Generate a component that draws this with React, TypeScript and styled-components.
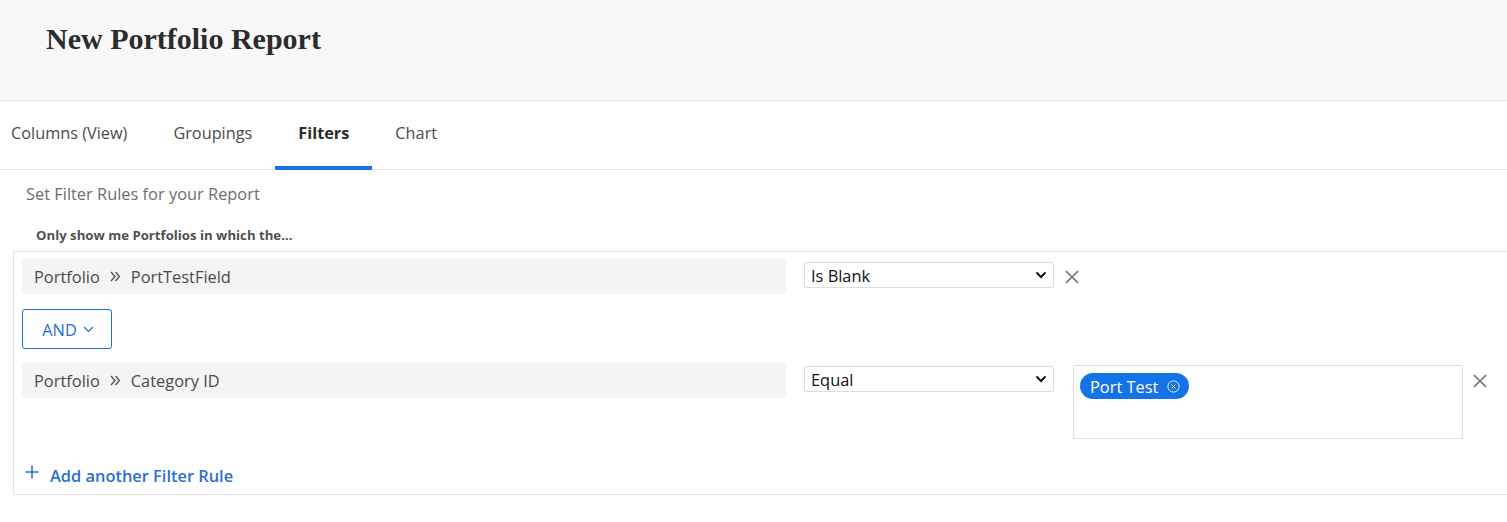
import styled, { createGlobalStyle } from "styled-components";

const GlobalStyle = createGlobalStyle`
  html, body {
    margin: 0;
    padding: 0;
    background: #ffffff;
    overflow: hidden;
  }
  body {
    font-family: "Open Sans", "Liberation Sans", sans-serif;
  }
`;

const Page = styled.div`
  width: 1507px;
  height: 522px;
  display: flex;
  flex-direction: column;
`;

const Header = styled.div`
  height: 101px;
  box-sizing: border-box;
  background: #f8f8f8;
  border-bottom: 1px solid #e6e6e6;
  padding: 19px 0 0 46px;
`;

const Title = styled.h1`
  margin: 0;
  font-family: "Liberation Serif", "Times New Roman", serif;
  font-weight: 700;
  font-size: 30px;
  line-height: 40px;
  color: #2c2c2c;
`;

const TabBar = styled.div`
  display: flex;
  height: 69px;
  box-sizing: border-box;
  border-bottom: 1px solid #e6e6e6;
  margin-left: -12px;
`;

const Tab = styled.div<{ $active?: boolean }>`
  display: flex;
  align-items: center;
  padding: 0 23px 2px;
  margin-bottom: -1px;
  font-size: 16.3px;
  color: ${(p) => (p.$active ? "#2c2c2c" : "#4b4b4b")};
  font-weight: ${(p) => (p.$active ? 700 : 400)};
  border-bottom: 4px solid ${(p) => (p.$active ? "#1473e6" : "transparent")};
`;

const Body = styled.div`
  display: flex;
  flex-direction: column;
`;

const Intro = styled.div`
  margin: 13px 0 0 26px;
  font-size: 16.4px;
  line-height: 22px;
  color: #6e6e6e;
`;

const Lead = styled.div`
  margin: 21px 0 0 36px;
  font-size: 13.2px;
  font-weight: 700;
  line-height: 18px;
  color: #505050;
`;

const RuleBox = styled.div`
  margin: 7px -20px 0 13px;
  border: 1px solid #e4e4e4;
  padding: 7px 0 7px 8px;
  display: flex;
  flex-direction: column;
  height: 244px;
  box-sizing: border-box;
`;

const Row = styled.div`
  display: flex;
  align-items: flex-start;
`;

const Field = styled.div`
  width: 764px;
  height: 35px;
  box-sizing: border-box;
  background: #f4f4f4;
  border-radius: 2px;
  display: flex;
  align-items: center;
  padding-left: 12px;
  font-size: 16.4px;
  color: #4b4b4b;
  gap: 10px;
`;

const Select = styled.div`
  margin: 3px 0 0 18px;
  width: 250px;
  height: 26px;
  box-sizing: border-box;
  border: 1px solid #dcdcdc;
  border-radius: 2px;
  display: flex;
  align-items: center;
  justify-content: space-between;
  padding: 0 6px 0 6px;
  font-size: 16.4px;
  color: #111;
`;

const RemoveButton = styled.button<{ $left: number; $top: number }>`
  margin: ${(p) => `${p.$top}px 0 0 ${p.$left}px`};
  width: 20px;
  height: 20px;
  padding: 0;
  border: none;
  background: none;
  display: flex;
  align-items: center;
  justify-content: center;
  cursor: pointer;
`;

const AndButton = styled.button`
  margin: 15px 0 14px 0;
  width: 90px;
  height: 40px;
  box-sizing: border-box;
  border: 1px solid #1a6fd6;
  border-radius: 3px;
  background: #fff;
  color: #1d6ed8;
  font-family: inherit;
  font-size: 16.4px;
  display: flex;
  align-items: center;
  justify-content: center;
  gap: 6px;
  padding: 0 0 0 2px;
`;

const ValueBox = styled.div`
  margin: 2px 0 0 19px;
  width: 390px;
  height: 74px;
  box-sizing: border-box;
  border: 1px solid #e1e1e1;
  padding: 7px 0 0 6px;
`;

const Tag = styled.span`
  display: inline-flex;
  align-items: center;
  gap: 9px;
  height: 26px;
  padding: 0 9px 0 10px;
  border-radius: 13px;
  background: #1473e6;
  color: #fff;
  font-size: 16.4px;
`;

const AddLink = styled.a`
  margin-top: auto;
  display: flex;
  align-items: flex-start;
  gap: 11px;
  padding-left: 3px;
  color: #2a6fd0;
  font-size: 16.4px;
  line-height: 22px;
  font-weight: 600;
  text-decoration: none;
  cursor: pointer;
`;

const Chevron = () => (
  <svg width="12" height="8" viewBox="0 0 12 8">
    <path d="M1.5 1.5 L6 6 L10.5 1.5" fill="none" stroke="#111" strokeWidth="2" />
  </svg>
);

const SmallChevron = () => (
  <svg width="11" height="7" viewBox="0 0 11 7">
    <path d="M1 1 L5.5 5.5 L10 1" fill="none" stroke="#1d6ed8" strokeWidth="1.2" />
  </svg>
);

const Cross = () => (
  <svg width="14" height="14" viewBox="0 0 14 14">
    <path d="M1 1 L13 13 M13 1 L1 13" stroke="#6e6e6e" strokeWidth="1.6" />
  </svg>
);

const Arrows = () => (
  <svg width="11" height="12" viewBox="0 0 11 12">
    <path d="M1 1 L5 5.5 L1 10 M5.5 1 L9.5 5.5 L5.5 10" fill="none" stroke="#4b4b4b" strokeWidth="1.2" />
  </svg>
);

const TagClose = () => (
  <svg width="13" height="13" viewBox="0 0 13 13">
    <circle cx="6.5" cy="6.5" r="5.6" fill="none" stroke="#fff" strokeWidth="0.9" />
    <path d="M4.6 4.6 L8.4 8.4 M8.4 4.6 L4.6 8.4" stroke="#fff" strokeWidth="0.9" />
  </svg>
);

const Plus = () => (
  <svg width="14" height="14" viewBox="0 0 14 14">
    <path d="M7 0.5 V13.5 M0.5 7 H13.5" stroke="#2a6fd0" strokeWidth="1.6" />
  </svg>
);

const App = () => {
  const tabs = ["Columns (View)", "Groupings", "Filters", "Chart"];
  return (
    <>
      <GlobalStyle />
      <Page>
        <Header>
          <Title>New Portfolio Report</Title>
        </Header>
        <TabBar>
          {tabs.map((t) => (
            <Tab key={t} $active={t === "Filters"}>
              {t}
            </Tab>
          ))}
        </TabBar>
        <Body>
          <Intro>Set Filter Rules for your Report</Intro>
          <Lead>Only show me Portfolios in which the...</Lead>
          <RuleBox>
            <Row>
              <Field>
                Portfolio <Arrows /> PortTestField
              </Field>
              <Select>
                Is Blank
                <Chevron />
              </Select>
              <RemoveButton $left={8} $top={8}>
                <Cross />
              </RemoveButton>
            </Row>
            <Row>
              <AndButton>
                AND <SmallChevron />
              </AndButton>
            </Row>
            <Row>
              <Field>
                Portfolio <Arrows /> Category ID
              </Field>
              <Select>
                Equal
                <Chevron />
              </Select>
              <ValueBox>
                <Tag>
                  Port Test <TagClose />
                </Tag>
              </ValueBox>
              <RemoveButton $left={7} $top={8}>
                <Cross />
              </RemoveButton>
            </Row>
            <AddLink>
              <Plus />
              Add another Filter Rule
            </AddLink>
          </RuleBox>
        </Body>
      </Page>
    </>
  );
};

export default App;
